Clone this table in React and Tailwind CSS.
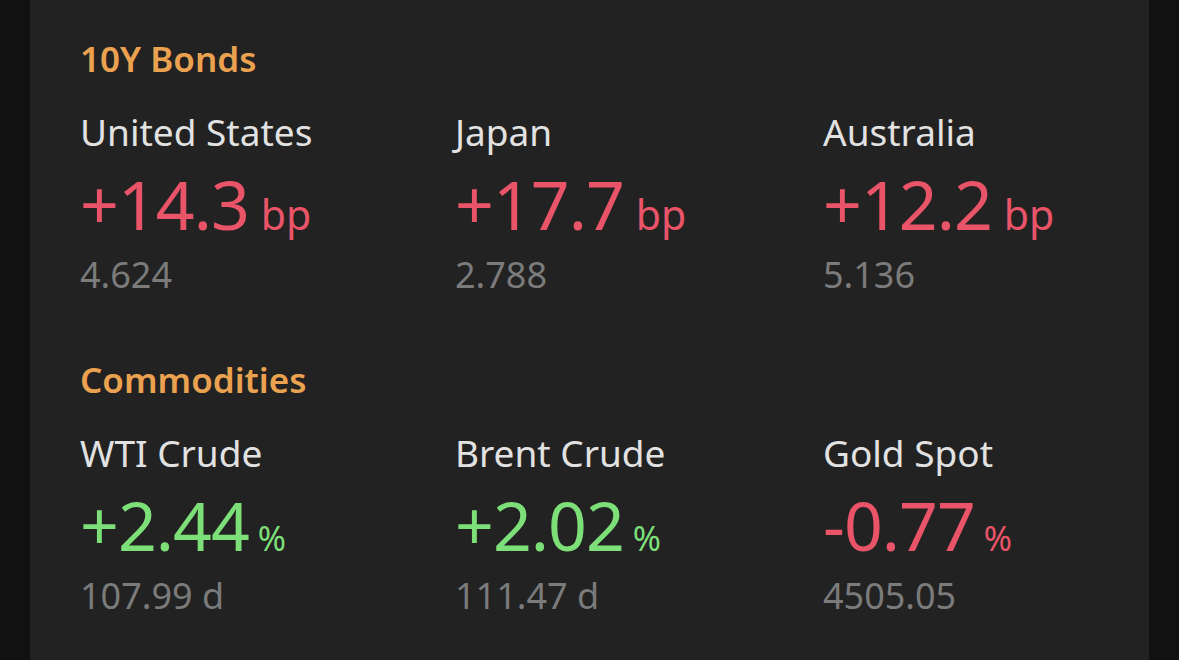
const sections = [
  {
    title: "10Y Bonds",
    items: [
      { name: "United States", value: "+14.3", unit: "bp", sub: "4.624", up: false },
      { name: "Japan", value: "+17.7", unit: "bp", sub: "2.788", up: false },
      { name: "Australia", value: "+12.2", unit: "bp", sub: "5.136", up: false },
    ],
  },
  {
    title: "Commodities",
    items: [
      { name: "WTI Crude", value: "+2.44", unit: "%", sub: "107.99 d", up: true },
      { name: "Brent Crude", value: "+2.02", unit: "%", sub: "111.47 d", up: true },
      { name: "Gold Spot", value: "-0.77", unit: "%", sub: "4505.05", up: false },
    ],
  },
];

const Quote = ({ item }) => {
  const color = item.up ? "text-[#7ddf78]" : "text-[#e95468]";
  const unitSize = item.unit === "%" ? "text-[34px] ml-[9px]" : "text-[41px] ml-[12px]";
  return (
    <div className="flex flex-col">
      <div className="text-[37px] leading-[44px] text-[#e2e2e2]">{item.name}</div>
      <div className={`mt-[14px] flex items-baseline ${color}`}>
        <span className="text-[68px] leading-[72px] tracking-[-1px]">{item.value}</span>
        <span className={`leading-none ${unitSize}`}>{item.unit}</span>
      </div>
      <div className="mt-[15px] text-[36px] leading-[40px] text-[#7b7b7b]">{item.sub}</div>
    </div>
  );
};

export default function App() {
  return (
    <div
      className="w-[1179px] h-[660px] overflow-hidden bg-[#111111] px-[30px]"
      style={{ fontFamily: '"Noto Sans", "Open Sans", sans-serif' }}
    >
      <div className="h-full bg-[#222222] pl-[50px] pt-[39px]">
        {sections.map((sec, i) => (
          <section key={sec.title} className={i > 0 ? "mt-[65px]" : ""}>
            <h2 className="text-[35px] leading-[40px] font-semibold text-[#eba250]">
              {sec.title}
            </h2>
            <div className="mt-[31px] grid grid-cols-[375px_368px_1fr]">
              {sec.items.map((item) => (
                <Quote key={item.name} item={item} />
              ))}
            </div>
          </section>
        ))}
      </div>
    </div>
  );
}
